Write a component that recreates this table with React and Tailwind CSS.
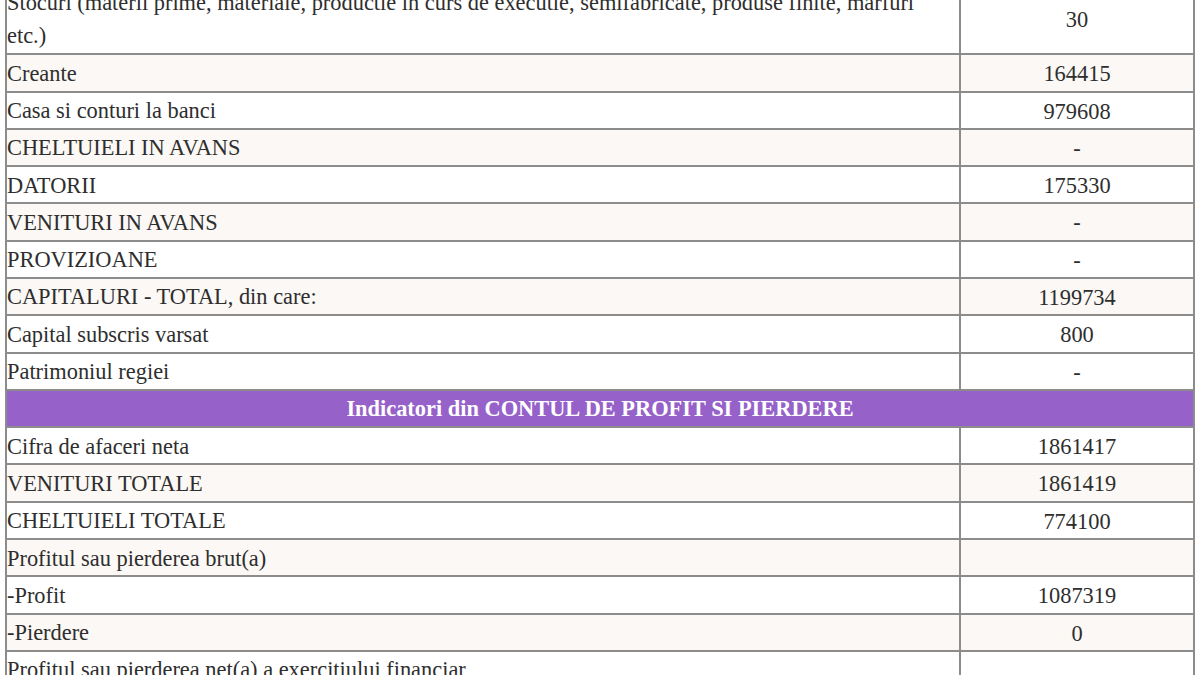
const rows = [
  {
    label: (
      <>
        Stocuri (materii prime, materiale, productie in curs de executie, semifabricate, produse finite, marfuri
        <br />
        etc.)
      </>
    ),
    value: "30",
    alt: false,
  },
  { label: "Creante", value: "164415", alt: true },
  { label: "Casa si conturi la banci", value: "979608", alt: false },
  { label: "CHELTUIELI IN AVANS", value: "-", alt: true },
  { label: "DATORII", value: "175330", alt: false },
  { label: "VENITURI IN AVANS", value: "-", alt: true },
  { label: "PROVIZIOANE", value: "-", alt: false },
  { label: "CAPITALURI - TOTAL, din care:", value: "1199734", alt: true },
  { label: "Capital subscris varsat", value: "800", alt: false },
  { label: "Patrimoniul regiei", value: "-", alt: false },
  { header: "Indicatori din CONTUL DE PROFIT SI PIERDERE" },
  { label: "Cifra de afaceri neta", value: "1861417", alt: false },
  { label: "VENITURI TOTALE", value: "1861419", alt: true },
  { label: "CHELTUIELI TOTALE", value: "774100", alt: false },
  { label: "Profitul sau pierderea brut(a)", value: "", alt: true },
  { label: "-Profit", value: "1087319", alt: false },
  { label: "-Pierdere", value: "0", alt: true },
  { label: "Profitul sau pierderea net(a) a exercitiului financiar", value: "", alt: false },
];

function Row({ row }) {
  if (row.header) {
    return (
      <div className="flex items-center justify-center border-b-2 border-[#8c8c8c] bg-[#9661c9] leading-[35.3px] font-bold text-white">
        {row.header}
      </div>
    );
  }
  return (
    <div className={"flex border-b-2 border-[#8c8c8c] " + (row.alt ? "bg-[#fbf8f5]" : "bg-white")}>
      <div className="w-[954px] shrink-0 whitespace-nowrap border-r-2 border-[#8c8c8c] pt-[1.5px] pb-[0.5px] leading-[33.3px]">
        {row.label}
      </div>
      <div className="flex flex-1 items-center justify-center pt-[2px] leading-[33.3px]">
        {row.value}
      </div>
    </div>
  );
}

export default function App() {
  return (
    <div className="h-[675px] w-[1200px] overflow-hidden bg-white">
      <div
        className="ml-[5px] mt-[-15.4px] w-[1190px] border-x-2 border-[#8c8c8c] text-[22.4px] text-[#2e2e2e]"
        style={{ fontFamily: '"Liberation Serif", "Times New Roman", serif' }}
      >
        {rows.map((row, i) => (
          <Row key={i} row={row} />
        ))}
      </div>
    </div>
  );
}
